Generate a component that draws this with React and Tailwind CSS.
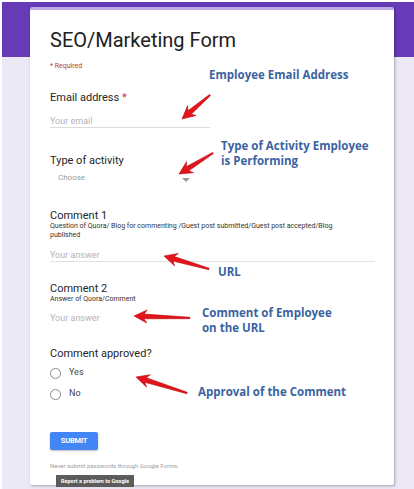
import React from "react";

// red annotation arrow, drawn from tail to head
const Arrow = ({ from, to }) => {
  const [tx, ty] = from;
  const [hx, hy] = to;
  const len = Math.hypot(hx - tx, hy - ty);
  const dx = (hx - tx) / len;
  const dy = (hy - ty) / len;
  const nx = -dy;
  const ny = dx;
  const p = (x, y) => `${x.toFixed(1)},${y.toFixed(1)}`;
  const neckX = hx - dx * 10;
  const neckY = hy - dy * 10;
  const barbX = hx - dx * 13;
  const barbY = hy - dy * 13;
  const pts = [
    p(tx + nx * 0.7, ty + ny * 0.7),
    p(neckX + nx * 2.4, neckY + ny * 2.4),
    p(barbX + nx * 6.5, barbY + ny * 6.5),
    p(hx, hy),
    p(barbX - nx * 6.5, barbY - ny * 6.5),
    p(neckX - nx * 2.4, neckY - ny * 2.4),
    p(tx - nx * 0.7, ty - ny * 0.7),
  ].join(" ");
  return <polygon points={pts} fill="#e3141b" stroke="#b8060c" strokeWidth="0.6" strokeLinejoin="round" />;
};

const Note = ({ className, children }) => (
  <div
    className={`absolute text-[11.5px] leading-[15px] font-bold text-[#3b63a0] ${className}`}
    style={{ fontFamily: '"Open Sans", "DejaVu Sans", sans-serif' }}
  >
    {children}
  </div>
);

const Radio = ({ label }) => (
  <div className="flex items-center h-[14px]">
    <span className="w-[11px] h-[11px] rounded-full border border-[#8a8a8a] bg-white" />
    <span className="ml-[8px] text-[9px] text-[#444]">{label}</span>
  </div>
);

export default function App() {
  return (
    <div
      className="relative w-[414px] h-[489px] overflow-hidden bg-white pl-[2px] pt-[2px]"
      style={{ fontFamily: 'Roboto, "Liberation Sans", sans-serif' }}
    >
      <div className="h-full bg-[#ece8f6]">
        {/* purple header band */}
        <div className="h-[55px] bg-[#673ab7]" />

        {/* form card */}
        <div className="relative ml-[28px] w-[364px] h-[478px] -mt-[50px] bg-white border-t-[3px] border-[#bda9e6] rounded-[2px] shadow-[1px_1px_3px_rgba(0,0,0,0.3)] px-[20px] pt-[18px]">
          <h1 className="text-[20px] leading-[24px] text-[#212121]">SEO/Marketing Form</h1>
          <p className="mt-[9px] text-[7px] leading-[10px] text-[#c0392b]">* Required</p>

          <div className="mt-[20px] text-[11px] leading-[14px] text-[#262626]">
            Email address <span className="text-[#c0392b]">*</span>
          </div>
          <div className="mt-[10px] w-[160px] border-b border-[#dcdcdc] text-[9px] leading-[12px] text-[#b4b4b4]">
            Your email
          </div>

          <div className="mt-[26px] text-[11px] leading-[14px] text-[#262626]">Type of activity</div>
          <div className="mt-[5px] w-[140px] flex items-center justify-between pl-[8px] text-[8px] leading-[10px] text-[#9a9a9a]">
            <span>Choose</span>
            <span className="mt-[3px] w-0 h-0 border-l-[4px] border-r-[4px] border-t-[4px] border-l-transparent border-r-transparent border-t-[#9a9a9a]" />
          </div>

          <div className="mt-[26px] text-[11px] leading-[13px] text-[#262626]">Comment 1</div>
          <p className="w-[302px] text-[7px] leading-[9px] text-[#333]">
            Question of Quora/ Blog for commenting /Guest post submitted/Guest post accepted/Blog published
          </p>
          <div className="mt-[9px] w-[325px] border-b border-[#e2e2e2] text-[9px] leading-[12px] text-[#b4b4b4]">
            Your answer
          </div>

          <div className="mt-[21px] text-[11px] leading-[12px] text-[#262626]">Comment 2</div>
          <p className="text-[7px] leading-[9px] text-[#333]">Answer of Quora/Comment</p>
          <div className="mt-[8px] text-[9px] leading-[12px] text-[#b4b4b4]">Your answer</div>

          <div className="mt-[23px] text-[11px] leading-[14px] text-[#262626]">Comment approved?</div>
          <div className="mt-[5px] flex flex-col gap-[7px]">
            <Radio label="Yes" />
            <Radio label="No" />
          </div>

          <button className="mt-[31px] w-[48px] h-[18px] rounded-[2px] bg-[#4285f4] text-white text-[7.5px] font-bold tracking-tight shadow-[0_1px_2px_rgba(0,0,0,0.25)]">
            SUBMIT
          </button>
          <p className="mt-[12px] text-[6px] leading-[8px] text-[#9e9e9e]">Never submit passwords through Google Forms.</p>
          <div className="mt-[5px] ml-[6px] w-[78px] h-[12px] bg-[#5c5c5c] flex items-center justify-center text-[5.5px] font-bold text-white">
            Report a problem to Google
          </div>
        </div>
      </div>

      {/* annotations laid over the screenshot */}
      <Note className="left-[209px] top-[67px]">Employee Email Address</Note>
      <Note className="left-[221px] top-[138px]">
        Type of Activity Employee
        <br />
        is Performing
      </Note>
      <Note className="left-[218px] top-[264px]">URL</Note>
      <Note className="left-[202px] top-[305px]">
        Comment of Employee
        <br />
        on the URL
      </Note>
      <Note className="left-[198px] top-[384px]">Approval of the Comment</Note>

      <svg className="absolute inset-0 pointer-events-none" width="414" height="489">
        <Arrow from={[210, 95]} to={[182, 119]} />
        <Arrow from={[213, 153]} to={[179, 174]} />
        <Arrow from={[209, 269]} to={[164, 256]} />
        <Arrow from={[190, 318]} to={[134, 316]} />
        <Arrow from={[187, 393]} to={[136, 377]} />
      </svg>
    </div>
  );
}
